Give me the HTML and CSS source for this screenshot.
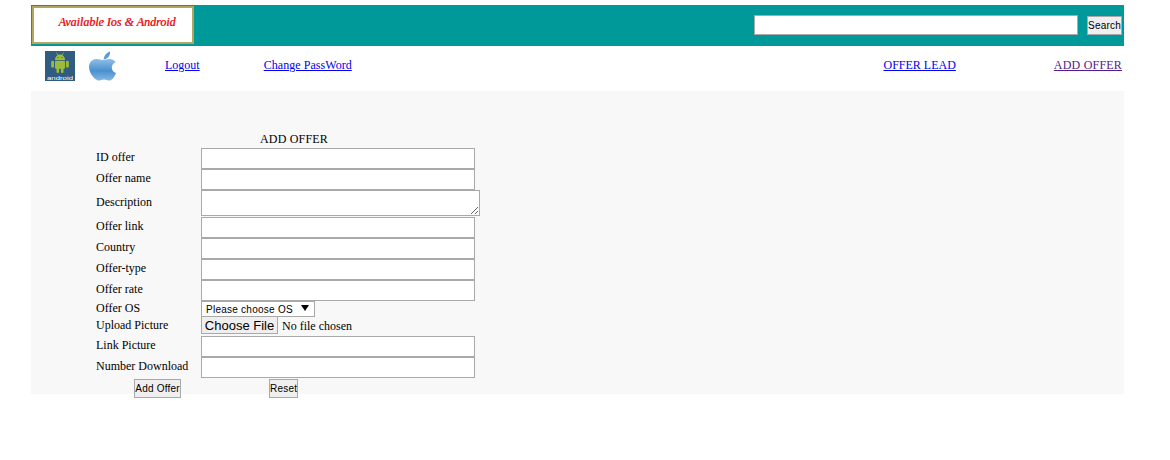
FILE: index.html
```html
<!DOCTYPE html>
<html lang="en">
<head>
    <meta charset="UTF-8">
    <title>Add Offer</title>
    <link rel="stylesheet" href="styles.css">
</head>
<body>
    <div class="container">
        <header class="top-bar">
            <div class="banner"><span>Available Ios &amp; Android</span></div>
            <form class="search">
                <input type="text" class="search-input">
                <button type="button" class="btn search-btn">Search</button>
            </form>
        </header>

        <nav class="menu">
            <svg class="icon-android" viewBox="0 0 30 30" width="30" height="30">
                <rect width="30" height="30" fill="#2f5c80"/>
                <path d="M11.500 1.500 L13 4.500 M18.500 1.500 L17 4.500" stroke="#9dbb3a" stroke-width="0.7"/>
                <path d="M10 9 C10 5.500 12.500 3.500 15 3.500 C17.500 3.500 20 5.500 20 9 Z" fill="#9dbb3a"/>
                <circle cx="13" cy="6.500" r="0.600" fill="#2f5c80"/>
                <circle cx="17" cy="6.500" r="0.600" fill="#2f5c80"/>
                <rect x="10" y="9.700" width="10" height="8" rx="1" fill="#9dbb3a"/>
                <rect x="6.200" y="9.700" width="2.800" height="7" rx="1.400" fill="#9dbb3a"/>
                <rect x="21" y="9.700" width="2.800" height="7" rx="1.400" fill="#9dbb3a"/>
                <rect x="11.500" y="16" width="2.600" height="6" rx="1.200" fill="#9dbb3a"/>
                <rect x="15.900" y="16" width="2.600" height="6" rx="1.200" fill="#9dbb3a"/>
                <text x="2" y="29" class="android-word" textLength="26" lengthAdjust="spacingAndGlyphs">android</text>
            </svg>
            <svg class="icon-apple" viewBox="0 0 30 30" width="30" height="30">
                <defs>
                    <linearGradient id="appleBlue" x1="0" y1="0" x2="0" y2="1">
                        <stop offset="0" stop-color="#8fc0e6"/>
                        <stop offset="0.55" stop-color="#4a90cf"/>
                        <stop offset="1" stop-color="#86b9e2"/>
                    </linearGradient>
                </defs>
                <path d="M15.500 8.500 C16.500 3.500 19 1.500 22 0.500 C22.500 4 20 8 15.500 8.500 Z" fill="#5c9bd3"/>
                <path d="M8 8 C11 7.500 13 9 15 9 C17 9 19.500 7.500 22.500 8 C25 8.400 26.500 9.700 27.500 11 C25 12.500 23.500 14.500 23.800 17 C24 19.500 25.800 21.300 28 22 C27 25 24.500 29 22 29.500 C20 30 18.500 28.500 16 28.500 C13.500 28.500 12 30 10 29.500 C6 28.500 1 21.500 1 16 C1 11.500 4 8.500 8 8 Z" fill="url(#appleBlue)"/>
            </svg>
            <a href="#" class="link-logout">Logout</a>
            <a href="#" class="link-pass">Change PassWord</a>
            <a href="#" class="link-lead">OFFER LEAD</a>
            <a href="#" class="link-add">ADD OFFER</a>
        </nav>

        <main class="panel">
            <form class="offer-form">
                <div class="form-title">ADD OFFER</div>
                <div class="row"><label>ID offer</label><input type="text"></div>
                <div class="row"><label>Offer name</label><input type="text"></div>
                <div class="row row-area"><label>Description</label><textarea></textarea></div>
                <div class="row"><label>Offer link</label><input type="text"></div>
                <div class="row"><label>Country</label><input type="text"></div>
                <div class="row"><label>Offer-type</label><input type="text"></div>
                <div class="row"><label>Offer rate</label><input type="text"></div>
                <div class="row row-select">
                    <label>Offer OS</label>
                    <div class="select-wrap">
                        <select><option>Please choose OS</option></select>
                    </div>
                </div>
                <div class="row row-file"><label>Upload Picture</label><input type="file"></div>
                <div class="row"><label>Link Picture</label><input type="text"></div>
                <div class="row"><label>Number Download</label><input type="text"></div>
                <div class="actions">
                    <button type="button" class="btn btn-add">Add Offer</button>
                    <button type="reset" class="btn btn-reset">Reset</button>
                </div>
            </form>
        </main>
    </div>
</body>
</html>
```

FILE: styles.css
```css
html, body {
    margin: 0;
    height: 460px;
    overflow: hidden;
    background-color: #ffffff;
}

body {
    font-family: "Liberation Serif", serif;
    font-size: 12px;
    color: #000000;
}

.container {
    width: 1093px;
    margin: 5px 0 0 31px;
}

/* Barra superior */
.top-bar {
    display: flex;
    justify-content: space-between;
    height: 41px;
    background-color: #009999;
}

.banner {
    box-sizing: border-box;
    display: flex;
    align-items: center;
    justify-content: center;
    width: 162px;
    height: 38px;
    margin: 1px 0 0 1px;
    padding: 0 0 6px 8px;
    background-color: #ffffff;
    border: 2px solid #b5a65f;
    color: #ee1c25;
    font-style: italic;
    font-size: 12px;
    text-shadow: 0.3px 0 0 #ee1c25;
}

.search {
    display: flex;
    align-items: flex-start;
    margin-right: 2px;
}

.search-input {
    box-sizing: border-box;
    width: 324px;
    height: 20px;
    margin: 10px 9px 0 0;
    padding: 0;
    border: 1px solid #a9a9a9;
    background-color: #ffffff;
}

.btn {
    box-sizing: border-box;
    height: 19px;
    padding: 0;
    font-family: "Liberation Sans", sans-serif;
    font-size: 10px;
    letter-spacing: 0.2px;
    white-space: nowrap;
    color: #000000;
    background-color: #efefef;
    border: 1px solid #a9a9a9;
    border-radius: 0;
}

.search-btn {
    width: 35px;
    margin-top: 11px;
}

/* Menu */
.menu {
    display: flex;
    align-items: center;
    height: 45px;
    padding: 0 2px 0 14px;
    font-size: 12px;
}

.icon-android {
    margin-top: -5px;
}

.icon-apple {
    margin: -5px 0 0 13px;
}

.android-word {
    font-family: "Liberation Sans", sans-serif;
    font-size: 5px;
    fill: #ffffff;
}

.menu a {
    color: #0000ee;
    margin-top: -7px;
}

.link-logout {
    margin-left: 47px;
}

.link-pass {
    margin-left: 64px;
    letter-spacing: 0.05px;
}

.menu .link-lead {
    margin-left: auto;
}

.menu .link-add {
    margin-left: 98px;
    letter-spacing: 0.2px;
    color: #551a8b;
}

/* Panel del formulario */
.panel {
    height: 303px;
    padding: 40px 0 0 65px;
    box-sizing: border-box;
    background-color: #f8f8f8;
}

.form-title {
    width: 396px;
    height: 17px;
    line-height: 16px;
    text-align: center;
    letter-spacing: 0.2px;
}

.row {
    display: flex;
    align-items: center;
    height: 21px;
}

.row label {
    width: 105px;
    flex: none;
    margin-top: -2px;
}

.row input[type="text"] {
    box-sizing: border-box;
    width: 274px;
    height: 21px;
    padding: 0;
    border: 1px solid #a9a9a9;
    background-color: #ffffff;
}

.row-area {
    height: 27px;
    align-items: flex-start;
}

.row-area label {
    margin-top: 0;
    line-height: 24px;
}

.row-area textarea {
    box-sizing: border-box;
    width: 279px;
    height: 26px;
    margin: 0;
    padding: 0;
    border: 1px solid #a9a9a9;
    background-color: #ffffff;
}

.row-select {
    height: 16px;
}

.select-wrap {
    position: relative;
    width: 114px;
    height: 16px;
}

.select-wrap::after {
    content: "";
    position: absolute;
    top: 4px;
    right: 6px;
    border-left: 4px solid transparent;
    border-right: 4px solid transparent;
    border-top: 6px solid #000000;
}

.select-wrap select {
    appearance: none;
    box-sizing: border-box;
    display: block;
    width: 114px;
    height: 16px;
    padding: 0 0 0 4px;
    border: 1px solid #a9a9a9;
    border-radius: 0;
    background-color: #ffffff;
    font-family: "Liberation Sans", sans-serif;
    font-size: 10px;
    letter-spacing: 0.25px;
}

.row-file {
    height: 19px;
}

.row-file label {
    margin-top: -3px;
}

.row-file input {
    font-family: "Liberation Serif", serif;
    font-size: 12px;
    margin-top: -3px;
}

.row-file input::file-selector-button {
    box-sizing: border-box;
    width: 77px;
    height: 18px;
    margin-right: 4px;
    padding: 0;
    font-family: "Liberation Sans", sans-serif;
    font-size: 13px;
    background-color: #efefef;
    border: 1px solid #a9a9a9;
    border-radius: 0;
}

.actions {
    display: flex;
    padding: 1px 0 0 38px;
}

.btn-add {
    width: 47px;
}

.btn-reset {
    width: 29px;
    margin-left: 88px;
}
```
